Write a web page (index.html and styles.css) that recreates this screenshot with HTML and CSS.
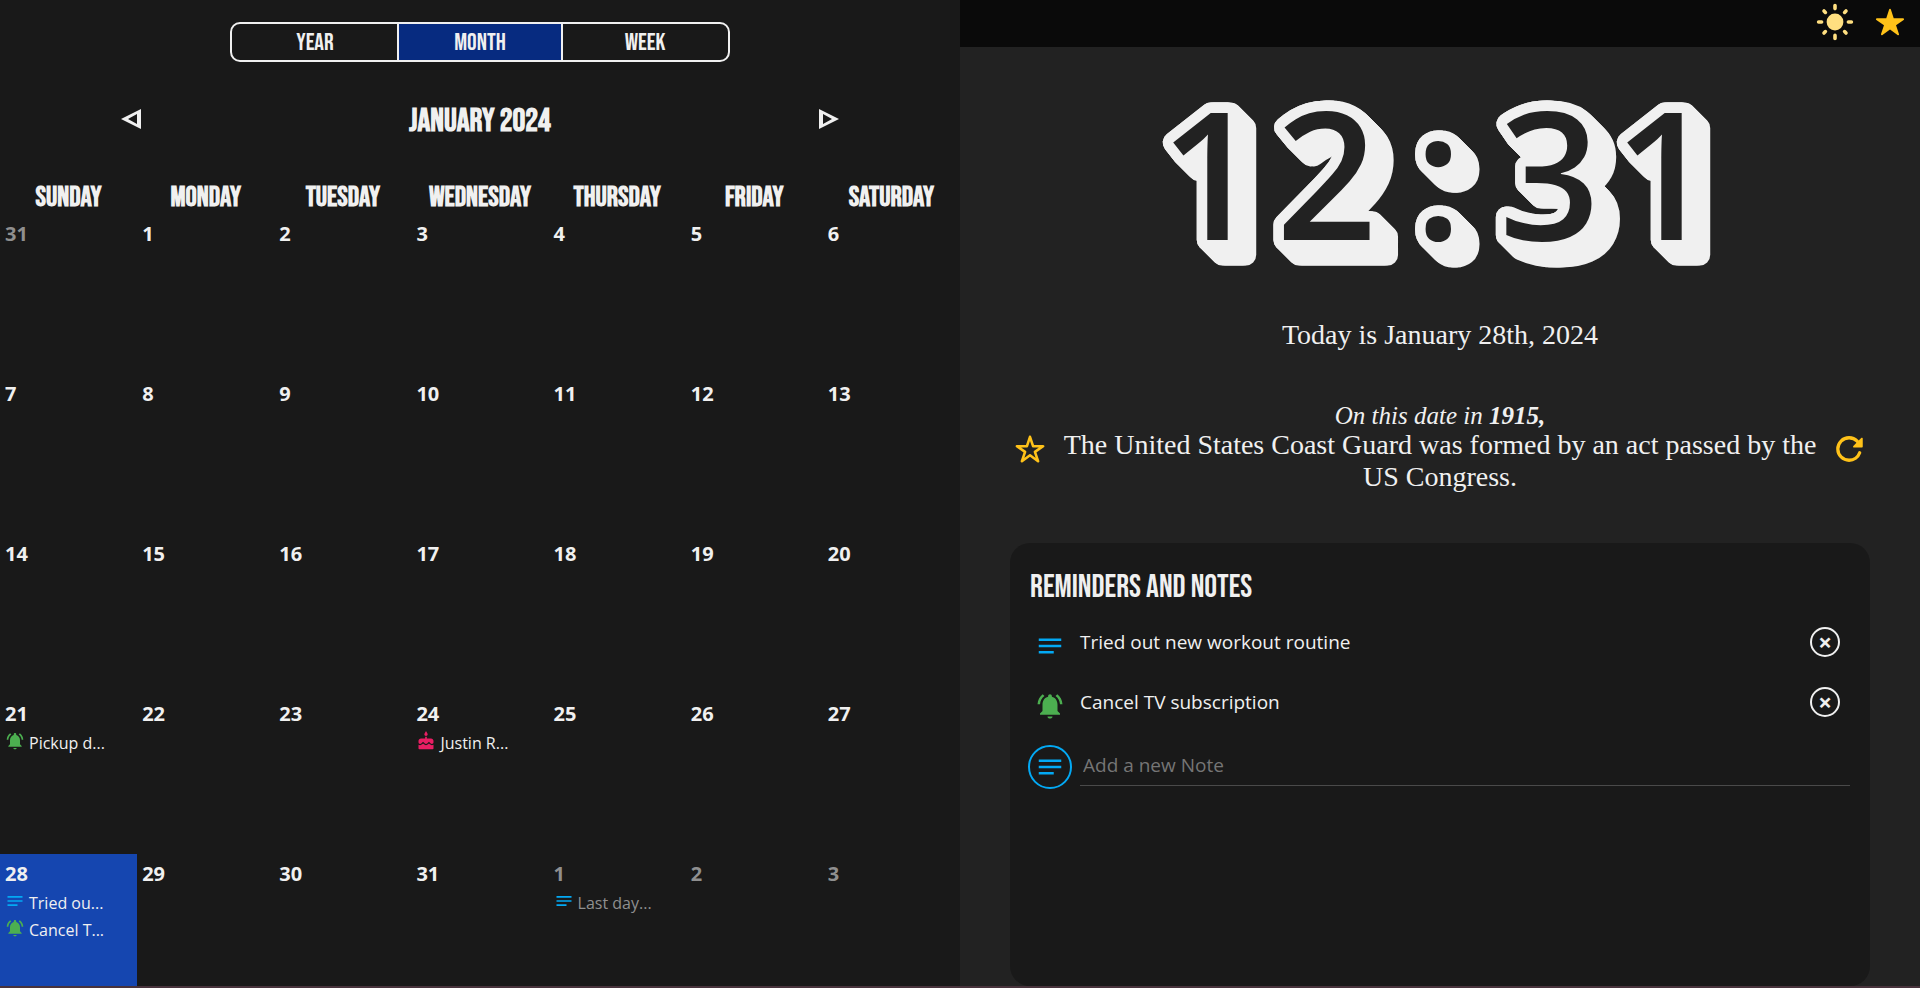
FILE: index.html
```html
<!DOCTYPE html>
<html lang="en">
<head>
<meta charset="utf-8">
<meta name="viewport" content="width=device-width, initial-scale=1">
<title>Calendar</title>
<link rel="stylesheet" href="styles.css">
</head>
<body>
<svg class="sprite" aria-hidden="true">
  <symbol id="note" viewBox="0 0 24 24"><path d="M3 11h18v2H3zM3 16h12v2H3zM3 6h18v2H3z"/></symbol>
  <symbol id="bell" viewBox="0 0 24 24"><path d="M7.58 4.08L6.15 2.65C3.75 4.48 2.17 7.3 2.03 10.5h2c.15-2.65 1.51-4.97 3.55-6.42zm12.39 6.42h2c-.15-3.2-1.73-6.02-4.12-7.85l-1.42 1.43c2.02 1.45 3.39 3.77 3.54 6.42zM18 11c0-3.07-1.64-5.64-4.5-6.32V4c0-.83-.67-1.5-1.5-1.5s-1.5.67-1.5 1.5v.68C7.63 5.36 6 7.92 6 11v5l-2 2v1h16v-1l-2-2v-5zm-6 11c1.100 0 2-.6 2-1.700h-4c0 1.100.9 1.700 2 1.700z"/></symbol>
  <symbol id="cake" viewBox="0 0 24 24"><path d="M12 6c1.110 0 2-.9 2-2 0-.38-.1-.73-.29-1.030L12 0l-1.710 2.970c-.19.3-.29.65-.29 1.030 0 1.100.9 2 2 2zm4.600 9.990l-1.070-1.070-1.080 1.070c-1.300 1.300-3.580 1.310-4.890 0l-1.070-1.070-1.090 1.070C6.750 16.640 5.880 17 4.960 17c-.73 0-1.400-.23-1.960-.61V21c0 .55.45 1 1 1h16c.55 0 1-.45 1-1v-4.610c-.56.38-1.230.61-1.960.61-.92 0-1.790-.36-2.440-1.010zM18 9h-5V7h-2v2H6c-1.660 0-3 1.340-3 3v1.540c0 1.080.88 1.960 1.960 1.960.52 0 1.020-.2 1.380-.57l2.140-2.130 2.130 2.130c.74.74 2.030.74 2.770 0l2.140-2.130 2.130 2.130c.37.37.86.57 1.380.57 1.080 0 1.960-.88 1.960-1.960V12c.01-1.660-1.330-3-2.990-3z"/></symbol>
</svg>

<main class="app">
  <section class="calendar" aria-label="Calendar">
    <div class="views">
      <button type="button">YEAR</button>
      <button type="button" class="active">MONTH</button>
      <button type="button">WEEK</button>
    </div>
    <div class="month-nav">
      <button type="button" aria-label="Previous month"><svg viewBox="0 0 22 22"><path fill-rule="evenodd" d="M21 1v20L1 11zM17 6l-9 5 9 5z"/></svg></button>
      <h1>JANUARY 2024</h1>
      <button type="button" aria-label="Next month"><svg viewBox="0 0 22 22"><path fill-rule="evenodd" d="M1 1v20l20-10zM5 6l9 5-9 5z"/></svg></button>
    </div>
    <table class="month">
      <thead>
        <tr><th>SUNDAY</th><th>MONDAY</th><th>TUESDAY</th><th>WEDNESDAY</th><th>THURSDAY</th><th>FRIDAY</th><th>SATURDAY</th></tr>
      </thead>
      <tbody>
        <tr><td class="other"><b>31</b></td><td><b>1</b></td><td><b>2</b></td><td><b>3</b></td><td><b>4</b></td><td><b>5</b></td><td><b>6</b></td></tr>
        <tr><td><b>7</b></td><td><b>8</b></td><td><b>9</b></td><td><b>10</b></td><td><b>11</b></td><td><b>12</b></td><td><b>13</b></td></tr>
        <tr><td><b>14</b></td><td><b>15</b></td><td><b>16</b></td><td><b>17</b></td><td><b>18</b></td><td><b>19</b></td><td><b>20</b></td></tr>
        <tr>
          <td><b>21</b><div class="event"><svg class="bell"><use href="#bell"/></svg><span>Pickup d...</span></div></td>
          <td><b>22</b></td><td><b>23</b></td>
          <td><b>24</b><div class="event"><svg class="cake"><use href="#cake"/></svg><span>Justin R...</span></div></td>
          <td><b>25</b></td><td><b>26</b></td><td><b>27</b></td>
        </tr>
        <tr>
          <td class="today"><b>28</b><div class="event"><svg class="note"><use href="#note"/></svg><span>Tried ou...</span></div><div class="event"><svg class="bell"><use href="#bell"/></svg><span>Cancel T...</span></div></td>
          <td><b>29</b></td><td><b>30</b></td><td><b>31</b></td>
          <td class="other"><b>1</b><div class="event"><svg class="note"><use href="#note"/></svg><span>Last day...</span></div></td>
          <td class="other"><b>2</b></td><td class="other"><b>3</b></td>
        </tr>
      </tbody>
    </table>
  </section>

  <section class="day" aria-label="Today">
    <header class="topbar">
      <button type="button" aria-label="Light theme"><svg class="sun" viewBox="0 0 38 38"><circle cx="19" cy="19" r="8.400"/><path d="M19 2.600v3M19 32.400v3M2.600 19h3M32.400 19h3M8 8l1.400 1.400M28.600 28.600l1.400 1.400M8 30l1.400-1.400M28.600 9.400l1.400-1.400"/></svg></button>
      <button type="button" aria-label="Favorites"><svg class="star" viewBox="0 0 512 512"><path d="M394 480a16 16 0 01-9.390-3L256 383.760 127.390 477a16 16 0 01-24.550-18.080L153 310.350 23 221.200a16 16 0 019-29.200h160.380l48.400-148.950a16 16 0 0130.440 0l48.400 149H480a16 16 0 019.050 29.200L359 310.350l50.130 148.530A16 16 0 01394 480z"/></svg></button>
    </header>
    <div class="content">
      <svg class="clock" viewBox="0 -33 600 245">
        <filter id="extrude" filterUnits="userSpaceOnUse" x="0" y="-33" width="600" height="245" color-interpolation-filters="sRGB">
          <feOffset in="SourceAlpha" dx="1" dy="1" result="o1"/>
          <feMerge result="m1"><feMergeNode in="SourceAlpha"/><feMergeNode in="o1"/></feMerge>
          <feOffset in="m1" dx="2" dy="2" result="o2"/>
          <feMerge result="m2"><feMergeNode in="m1"/><feMergeNode in="o2"/></feMerge>
          <feOffset in="m2" dx="4" dy="4" result="o3"/>
          <feMerge result="m3"><feMergeNode in="m2"/><feMergeNode in="o3"/></feMerge>
          <feOffset in="m3" dx="8" dy="8" result="o4"/>
          <feMerge result="m4"><feMergeNode in="m3"/><feMergeNode in="o4"/></feMerge>
          <feOffset in="m4" dx="3" dy="0" result="o5"/>
          <feMerge result="m5"><feMergeNode in="m4"/><feMergeNode in="o5"/></feMerge>
          <feFlood flood-color="#f0f0f0"/>
          <feComposite in2="m5" operator="in" result="side"/>
          <feMerge><feMergeNode in="side"/><feMergeNode in="SourceGraphic"/></feMerge>
        </filter>
        <text x="20 136 274 359 474" y="160" filter="url(#extrude)">12:31</text>
      </svg>
      <p class="date">Today is January 28th, 2024</p>
      <div class="history">
        <button type="button" aria-label="Save fact"><svg viewBox="0 0 512 512"><path class="line" d="M480 208H308L256 48l-52 160H32l140 96-54 160 138-100 138 100-54-160z"/></svg></button>
        <div class="fact">
          <p class="lead">On this date in <strong>1915,</strong></p>
          <p class="text">The United States Coast Guard was formed by an act passed by the US Congress.</p>
        </div>
        <button type="button" aria-label="Another fact"><svg viewBox="0 0 512 512"><path class="line thick" d="M400 148l-21.120-24.570A191.430 191.430 0 00240 64C134 64 48 150 48 256s86 192 192 192a192.090 192.090 0 00181.070-128"/><path d="M474 80V214a16 16 0 01-16 16H324c-14.260 0-21.410-17.230-11.320-27.310L446.690 69C456.770 59 474 66 474 80z"/></svg></button>
      </div>
      <section class="notes">
        <h2>REMINDERS AND NOTES</h2>
        <ul>
          <li><svg class="note"><use href="#note"/></svg><span>Tried out new workout routine</span><button type="button" aria-label="Remove Tried out new workout routine">×</button></li>
          <li><svg class="bell"><use href="#bell"/></svg><span>Cancel TV subscription</span><button type="button" aria-label="Remove Cancel TV subscription">×</button></li>
        </ul>
        <form class="add">
          <button type="button" aria-label="Change type"><svg class="note"><use href="#note"/></svg></button>
          <input type="text" placeholder="Add a new Note" aria-label="Add a new Note">
        </form>
      </section>
    </div>
  </section>
</main>
</body>
</html>
```
FILE: styles.css
```css
:root {
  --ink: #f0f0f0;
  --dark: #191919;
  --panel: #222222;
  --amber: #ffc219;
  --condensed: "Bebas Neue", "Liberation Sans Narrow", "Liberation Sans", sans-serif;
  --body: "Segoe UI", "Open Sans", "Noto Sans", sans-serif;
  --serif: "Liberation Serif", serif;
}

* { box-sizing: border-box; }

body {
  margin: 0;
  height: 100vh;
  overflow: hidden;
  background: var(--dark);
  color: var(--ink);
  font-family: var(--body);
}

h1, h2, p, ul { margin: 0; padding: 0; }

button {
  padding: 0;
  border: 0;
  background: none;
  color: inherit;
  font: inherit;
  cursor: pointer;
}

svg { display: block; fill: currentColor; }
.sprite { display: none; }
.note { color: #03a9f4; }
.bell { color: #4caf50; }
.cake { color: #e91e63; }

.app {
  display: grid;
  grid-template-columns: 1fr 1fr;
  height: 100%;
  border-bottom: 2px solid #48333c;
}

/* calendar */
.calendar { overflow: hidden; min-height: 0; background: var(--dark); }

.views {
  display: grid;
  grid-template-columns: 1fr 1fr 1fr;
  width: 52%;
  height: 40px;
  margin: 22px auto 0;
  border: 2px solid var(--ink);
  border-radius: 10px;
  overflow: hidden;
}
.views button { padding-top: 1px; font: 24px/35px var(--condensed); }
.views .active {
  background: #072b80;
  border: solid var(--ink);
  border-width: 0 2px;
}

.month-nav {
  display: flex;
  align-items: center;
  justify-content: space-between;
  height: 36px;
  margin: 39px 120px 0;
}
.month-nav h1 { padding-top: 6px; font: bold 32px/36px var(--condensed); }
.month-nav svg { width: 22px; height: 22px; }

.month {
  width: 100%;
  margin-top: 41px;
  border-collapse: collapse;
  table-layout: fixed;
}
.month th { height: 36px; padding: 4px 0 0; font: bold 28px/32px var(--condensed); }
.month td { height: 160px; padding: 6px 5px; vertical-align: top; }
.month b { display: block; font-size: 20px; line-height: 28px; }
.month .today { background: #1546b0; }
.month .other b, .month .other span { color: #8f8f8f; }

.event { display: flex; gap: 4px; height: 27px; font-size: 16px; line-height: 30px; white-space: nowrap; }
.event svg { flex: none; width: 20px; height: 20px; margin-top: 3px; }

/* day */
.day { display: flex; flex-direction: column; min-height: 0; background: var(--panel); }

.topbar {
  display: flex;
  flex: none;
  justify-content: flex-end;
  gap: 21px;
  height: 47px;
  padding: 3px 15px 0 0;
  background: #0a0a0a;
}
.topbar button { height: 38px; }
.sun { width: 38px; height: 38px; color: #ffdf80; }
.sun path { fill: none; stroke: currentColor; stroke-width: 3.6; stroke-linecap: round; }
.star { width: 30px; height: 30px; color: var(--amber); }

.content {
  display: flex;
  flex: 1;
  flex-direction: column;
  min-height: 0;
  padding: 0 50px;
}

.clock { flex: none; width: 600px; max-width: 100%; margin: 0 auto; }
.clock text {
  fill: var(--panel);
  stroke: var(--ink);
  stroke-width: 21px;
  stroke-linejoin: round;
  paint-order: stroke;
  font: 600 177px "Open Sans", "Noto Sans", sans-serif;
}

.date { margin-top: 27px; font: 28px/32px var(--serif); text-align: center; }

.history { display: flex; align-items: center; margin-top: 50px; font-family: var(--serif); text-align: center; }
.history button { flex: none; width: 40px; padding-top: 4px; color: var(--amber); }
.history svg { width: 30px; height: 30px; margin: auto; }
.line { fill: none; stroke: currentColor; stroke-width: 44; stroke-linecap: round; stroke-linejoin: round; }
.thick { stroke-width: 56; }
.fact { flex: 1; padding: 0 10px; }
.lead { padding-top: 2px; font-size: 25px; font-style: italic; line-height: 26px; }
.text { font-size: 28px; line-height: 32px; }

.notes {
  flex: 1;
  margin-top: 50px;
  padding: 28px 20px;
  border-radius: 20px;
  background: var(--dark);
}
.notes h2 { font: 32px/34px var(--condensed); }
.notes ul { margin-top: 7px; list-style: none; }
.notes li { display: flex; align-items: center; height: 60px; }
.notes li svg { width: 30px; height: 30px; margin: 8px 15px 0 5px; }
.notes li span { flex: 1; font-size: 19px; }
.notes li button {
  width: 30px;
  height: 30px;
  margin-right: 10px;
  border: 2px solid var(--ink);
  border-radius: 50%;
  font: bold 24px/26px var(--body);
}
.add { display: flex; margin: 13px 0 0 -2px; }
.add button {
  display: grid;
  place-items: center;
  flex: none;
  width: 44px;
  height: 44px;
  margin-right: 8px;
  border: 2px solid #03a9f4;
  border-radius: 50%;
}
.add svg { width: 30px; height: 30px; }
.add input {
  flex: 1;
  height: 41px;
  padding: 0 3px;
  border: 0;
  border-bottom: 1px solid #4a4a4a;
  background: none;
  color: var(--ink);
  font: 19px/40px var(--body);
}
.add input::placeholder { color: #757575; opacity: 1; }
```
